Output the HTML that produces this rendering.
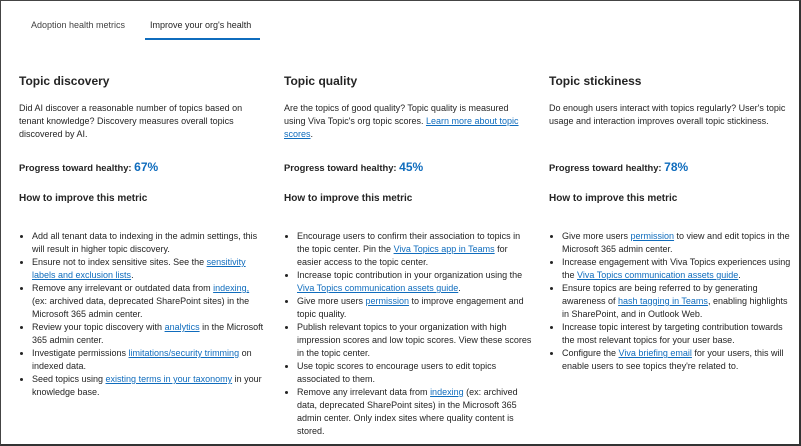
<!DOCTYPE html>
<html><head><meta charset="utf-8"><style>
*{margin:0;padding:0;box-sizing:border-box}
html,body{width:801px;height:446px;overflow:hidden;background:#fff}
body{font-family:"Liberation Sans",sans-serif;color:#242424;position:relative;border:1px solid #444;border-right:2px solid #333;border-bottom:2px solid #333}
.tab{position:absolute;top:19px;font-size:9px;color:#424242}
.tabline{position:absolute;left:144px;top:37px;width:115px;height:2px;background:#0f6cbd}
.col{position:absolute;top:0;width:260px}
h2{position:absolute;top:73px;font-size:12px;font-weight:bold;white-space:nowrap;color:#242424}
.desc{position:absolute;top:101px;font-size:9px;line-height:13px;white-space:nowrap}
.prog{position:absolute;top:159px;font-size:9.4px;font-weight:bold;white-space:nowrap}
.prog b{color:#0f6cbd;font-size:12px}
h3{position:absolute;top:192px;font-size:10px;font-weight:bold;white-space:nowrap}
ul{position:absolute;top:229px;list-style:none;font-size:9px;line-height:13px;white-space:nowrap}
li{position:relative;padding-left:13px}
li:before{content:"";position:absolute;left:1px;top:5px;width:3px;height:3px;background:#242424;border-radius:50%}
a{color:#0f6cbd;text-decoration:underline}
</style></head><body>
<div class="tab" style="left:30px">Adoption health metrics</div>
<div class="tab" style="left:149px;color:#242424">Improve your org's health</div>
<div class="tabline"></div>

<div class="col" style="left:18px">
<h2>Topic discovery</h2>
<div class="desc">Did AI discover a reasonable number of topics based on<br>tenant knowledge? Discovery measures overall topics<br>discovered by AI.</div>
<div class="prog">Progress toward healthy: <b>67%</b></div>
<h3>How to improve this metric</h3>
<ul>
<li>Add all tenant data to indexing in the admin settings, this<br>will result in higher topic discovery.</li>
<li>Ensure not to index sensitive sites. See the <a>sensitivity</a><br><a>labels and exclusion lists</a>.</li>
<li>Remove any irrelevant or outdated data from <a>indexing,</a><br>(ex: archived data, deprecated SharePoint sites) in the<br>Microsoft 365 admin center.</li>
<li>Review your topic discovery with <a>analytics</a> in the Microsoft<br>365 admin center.</li>
<li>Investigate permissions <a>limitations/security trimming</a> on<br>indexed data.</li>
<li>Seed topics using <a>existing terms in your taxonomy</a> in your<br>knowledge base.</li>
</ul>
</div>

<div class="col" style="left:283px">
<h2>Topic quality</h2>
<div class="desc">Are the topics of good quality? Topic quality is measured<br>using Viva Topic's org topic scores. <a>Learn more about topic</a><br><a>scores</a>.</div>
<div class="prog">Progress toward healthy: <b>45%</b></div>
<h3>How to improve this metric</h3>
<ul>
<li>Encourage users to confirm their association to topics in<br>the topic center. Pin the <a>Viva Topics app in Teams</a> for<br>easier access to the topic center.</li>
<li>Increase topic contribution in your organization using the<br><a>Viva Topics communication assets guide</a>.</li>
<li>Give more users <a>permission</a> to improve engagement and<br>topic quality.</li>
<li>Publish relevant topics to your organization with high<br>impression scores and low topic scores. View these scores<br>in the topic center.</li>
<li>Use topic scores to encourage users to edit topics<br>associated to them.</li>
<li>Remove any irrelevant data from <a>indexing</a> (ex: archived<br>data, deprecated SharePoint sites) in the Microsoft 365<br>admin center. Only index sites where quality content is<br>stored.</li>
</ul>
</div>

<div class="col" style="left:548px">
<h2>Topic stickiness</h2>
<div class="desc">Do enough users interact with topics regularly? User's topic<br>usage and interaction improves overall topic stickiness.</div>
<div class="prog">Progress toward healthy: <b>78%</b></div>
<h3>How to improve this metric</h3>
<ul>
<li>Give more users <a>permission</a> to view and edit topics in the<br>Microsoft 365 admin center.</li>
<li>Increase engagement with Viva Topics experiences using<br>the <a>Viva Topics communication assets guide</a>.</li>
<li>Ensure topics are being referred to by generating<br>awareness of <a>hash tagging in Teams</a>, enabling highlights<br>in SharePoint, and in Outlook Web.</li>
<li>Increase topic interest by targeting contribution towards<br>the most relevant topics for your user base.</li>
<li>Configure the <a>Viva briefing email</a> for your users, this will<br>enable users to see topics they're related to.</li>
</ul>
</div>
</body></html>
